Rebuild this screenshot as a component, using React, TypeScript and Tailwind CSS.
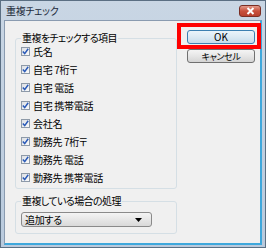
import React from "react";

const items = [
  "氏名",
  "自宅 7桁〒",
  "自宅 電話",
  "自宅 携帯電話",
  "会社名",
  "勤務先 7桁〒",
  "勤務先 電話",
  "勤務先 携帯電話",
];

function Check() {
  return (
    <span className="flex h-[9px] w-[9px] shrink-0 items-center justify-center border border-[#8e9aa8] bg-gradient-to-br from-[#dcdfe3] to-[#fbfbfb]">
      <svg width="7" height="7" viewBox="0 0 7 7">
        <path d="M0.8 3.5 L2.7 5.6 L6.2 0.8" fill="none" stroke="#2a5ab8" strokeWidth="1.5" />
      </svg>
    </span>
  );
}

export default function App() {
  return (
    <div
      className="relative flex h-[248px] w-[266px] flex-col border border-[#5b6f83] bg-gradient-to-b from-[#c9d6e4] to-[#b9cadd]"
      style={{ fontFamily: '"Noto Sans CJK JP", "Noto Sans", sans-serif', fontFeatureSettings: '"palt"' }}
    >
      {/* title bar */}
      <div className="flex h-[19px] shrink-0 items-center justify-between pl-[5px] pr-[4px]">
        <span className="text-[10px] leading-none tracking-[-0.3px] text-[#1c2a3a]">重複チェック</span>
        <div className="flex h-[12px] w-[22px] items-center justify-center rounded-[3px] border border-[#7a2e24] bg-gradient-to-b from-[#e29a8c] via-[#c8503c] to-[#b8412e]">
          <svg width="9" height="8" viewBox="0 0 9 8">
            <path d="M1.5 1 L7.5 7 M7.5 1 L1.5 7" stroke="#fff" strokeWidth="2" />
          </svg>
        </div>
      </div>

      {/* client area */}
      <div className="mx-[3px] mb-[2px] flex flex-1 border-t border-l border-t-[#8a9bb0] border-l-[#8a9bb0] border-r-[2px] border-b-[2px] border-r-[#3fa8dc] border-b-[#3fa8dc] bg-[#f0f0f0]">
        <div className="flex w-[172px] flex-col pl-[10px] pt-[10px]">
          <fieldset className="h-[158px] rounded-[3px] border border-[#d5dfe5] pl-[5px] pr-0">
            <legend className="px-[1px] text-[10px] leading-[14px] tracking-[-0.6px] text-black">
              重複をチェックする項目
            </legend>
            <div className="flex flex-col gap-[9px] pt-[2px]">
              {items.map((t) => (
                <div key={t} className="flex h-[9px] items-center gap-[3px]">
                  <Check />
                  <span className="text-[10px] leading-none tracking-[-0.3px] text-black">{t}</span>
                </div>
              ))}
            </div>
          </fieldset>
          <fieldset className="mt-[5px] h-[40px] rounded-[3px] border border-[#d5dfe5] pl-[5px] pr-0">
            <legend className="px-[1px] text-[10px] leading-[14px] tracking-[-0.6px] text-black">
              重複している場合の処理
            </legend>
            <div className="mt-[4px] flex h-[15px] w-[131px] items-center justify-between rounded-[3px] border border-[#8a8a8a] bg-gradient-to-b from-[#f4f4f4] to-[#d9d9d9] pl-[3px] pr-[9px]">
              <span className="text-[10px] leading-none tracking-[-0.3px] text-black">追加する</span>
              <svg width="7" height="4" viewBox="0 0 7 4">
                <path d="M0 0 H7 L3.5 4 Z" fill="#000" />
              </svg>
            </div>
          </fieldset>
        </div>
        <div className="flex flex-col gap-[5px] pl-[10px] pt-[9px]">
          <div className="flex h-[14px] w-[68px] items-center justify-center rounded-[3px] border border-[#3c7fb1] bg-gradient-to-b from-[#eaf4fb] via-[#dbe9f3] to-[#c6dceb] text-[10px] leading-none text-black">
            OK
          </div>
          <div className="flex h-[14px] w-[68px] items-center justify-center rounded-[3px] border border-[#707070] bg-gradient-to-b from-[#f4f4f4] via-[#e6e6e6] to-[#d4d4d4] text-[9px] leading-none tracking-[-0.4px] text-black">
            キャンセル
          </div>
        </div>
      </div>

      {/* red highlight */}
      <div className="absolute left-[176px] top-[22px] h-[26px] w-[84px] border-[4px] border-[#ff0000]" />
    </div>
  );
}
